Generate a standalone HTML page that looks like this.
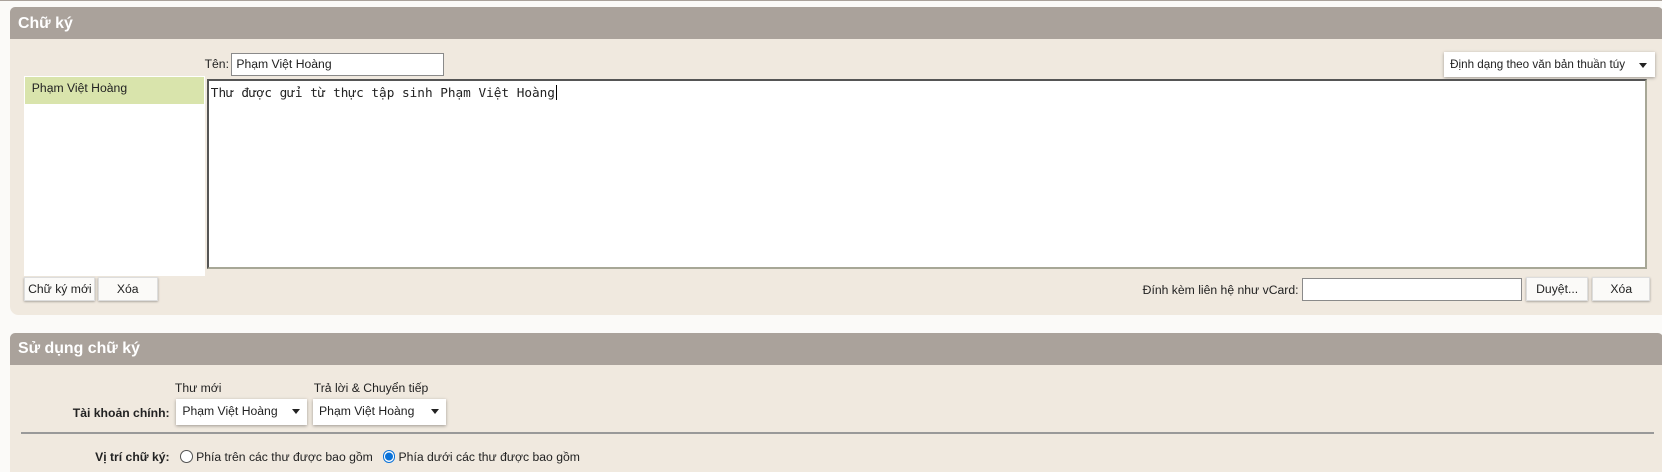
<!DOCTYPE html>
<html><head><meta charset="utf-8"><style>
*{box-sizing:border-box;margin:0;padding:0}
html,body{width:1662px;height:472px;overflow:hidden;background:#fbfaf8}
#w{width:1568px;height:445px;zoom:1.06;position:relative;overflow:hidden;font-family:"Liberation Sans",sans-serif;font-size:11.5px;color:#222}
.a{position:absolute;white-space:nowrap}
.hd{background:#aaa29b;color:#fff;font-weight:bold;font-size:15px;padding:7px 0 0 8px;height:30px;border-radius:5px 5px 0 0}
.bd{background:#f0e9df}
.btn{position:absolute;background:#fbfaf8;border:1px solid #ddd;box-shadow:0 1px 2px rgba(0,0,0,.35);text-align:center;line-height:22px;white-space:nowrap}
.inp{position:absolute;background:#fff;border:1px solid #8a8a8a;white-space:nowrap}
.sel{position:absolute;background:#fff;box-shadow:0 1px 3px rgba(0,0,0,.35);line-height:24px;padding-left:6px;white-space:nowrap;overflow:hidden}
.sel:after{content:"";position:absolute;right:7px;top:10px;border:4px solid transparent;border-top:5px solid #222;border-bottom:0}
.radio{position:absolute;width:12px;height:12px;border:1px solid #555;border-radius:50%;background:#fff}
</style></head><body><div id="w">
<div class="a" style="left:0;top:0;width:1568px;height:1px;background:#aaa29b"></div>
<div class="a hd" style="left:9px;top:7px;width:1560px">Chữ ký</div>
<div class="a bd" style="left:9px;top:37px;width:1560px;height:260px;border-radius:0 0 0 8px"></div>
<div class="a" style="left:193px;top:54px">Tên:</div>
<div class="inp" style="left:218px;top:50px;width:201px;height:22px;padding:3px 4px">Phạm Việt Hoàng</div>
<div class="sel" style="left:1362px;top:49px;width:199px;height:24px;padding-right:18px;font-size:11px">Định dạng theo văn bản thuần túy</div>
<div class="a" style="left:23px;top:72px;width:170px;height:188px;background:#fff"></div>
<div class="a" style="left:24px;top:73px;width:168px;height:25px;background:#d9e4ac;padding:3px 6px">Phạm Việt Hoàng</div>
<div class="a" style="left:195px;top:75px;width:1359px;height:179px;background:#fff;border:2px solid #a7a796;border-top-color:#555;border-left-color:#555;font-family:'DejaVu Sans Mono','Liberation Mono',monospace;font-size:12px;padding:3px 2px">Thư được gửi từ thực tập sinh Phạm Việt Hoàng<span style="border-left:1px solid #000;margin-left:1px"></span></div>
<div class="btn" style="left:23px;top:261px;width:67px;height:23px">Chữ ký mới</div>
<div class="btn" style="left:92px;top:261px;width:57px;height:23px">Xóa</div>
<div class="a" style="right:343px;top:267px">Đính kèm liên hệ như vCard:</div>
<div class="inp" style="left:1228px;top:262px;width:208px;height:22px"></div>
<div class="btn" style="left:1440px;top:261px;width:58px;height:23px">Duyệt...</div>
<div class="btn" style="left:1502px;top:261px;width:55px;height:23px">Xóa</div>

<div class="a hd" style="left:9px;top:314px;width:1560px">Sử dụng chữ ký</div>
<div class="a bd" style="left:9px;top:344px;width:1560px;height:101px"></div>
<div class="a" style="left:165px;top:359px">Thư mới</div>
<div class="a" style="left:296px;top:359px">Trả lời &amp; Chuyển tiếp</div>
<div class="a" style="right:1408px;top:383px;font-weight:bold">Tài khoản chính:</div>
<div class="sel" style="left:166px;top:376px;width:124px;height:25px">Phạm Việt Hoàng</div>
<div class="sel" style="left:295px;top:376px;width:126px;height:25px">Phạm Việt Hoàng</div>
<div class="a" style="left:20px;top:408px;width:1540px;height:1px;background:#999"></div>
<div class="a" style="right:1408px;top:425px;font-weight:bold">Vị trí chữ ký:</div>
<div class="radio" style="left:170px;top:425px"></div>
<div class="a" style="left:185px;top:425px">Phía trên các thư được bao gồm</div>
<div class="radio" style="left:361px;top:425px;border-color:#0a72d8;background:radial-gradient(circle,#0a72d8 3.5px,#fff 4px)"></div>
<div class="a" style="left:376px;top:425px">Phía dưới các thư được bao gồm</div>
</div></body></html>
